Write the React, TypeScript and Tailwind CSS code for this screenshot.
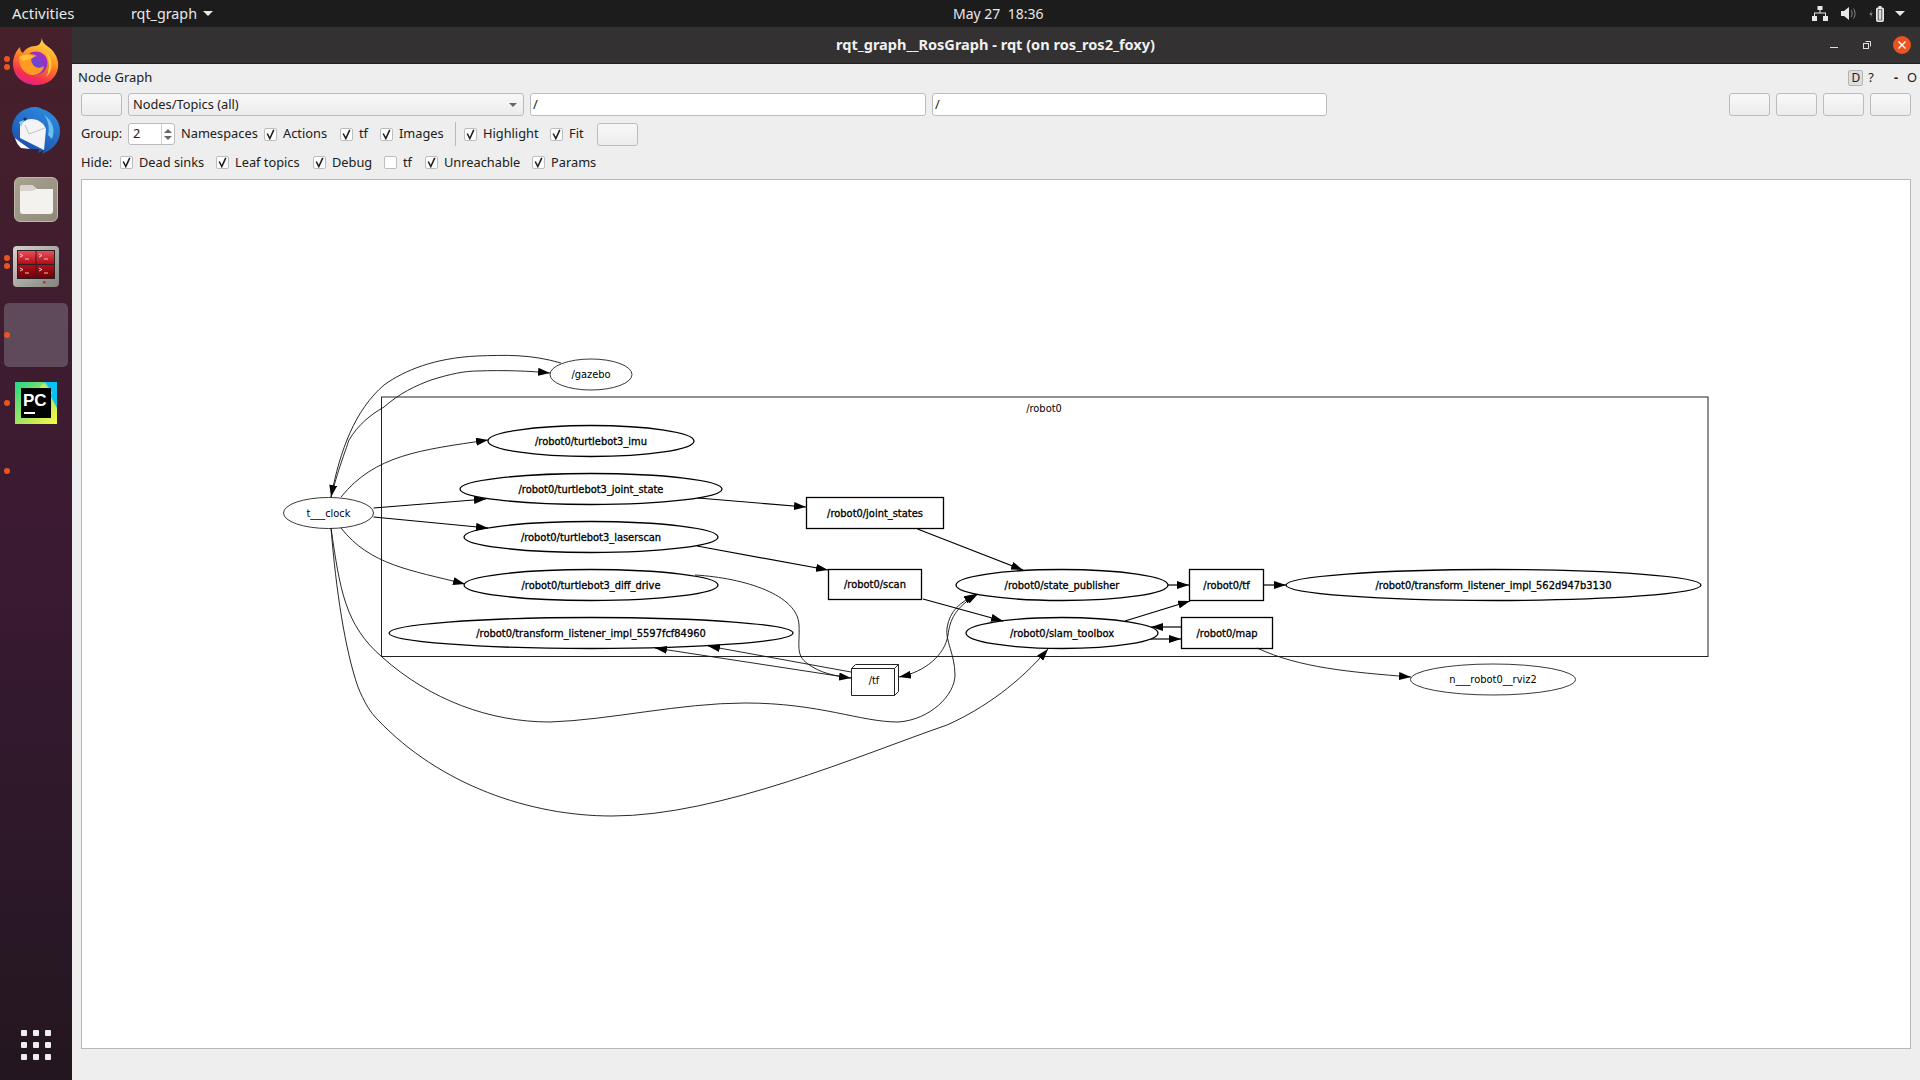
import React from 'react';

const ui = 'font-["Noto_Sans",sans-serif]';

const Check = ({ on = true }: { on?: boolean }) => (
    <span className="w-[13px] h-[13px] shrink-0 bg-white border border-[#bdbdbd] rounded-[2px] flex items-center justify-center">
        {on && (
            <svg width="9" height="11" viewBox="0 0 9 11">
                <path d="M1.2 4.5 L3.8 9.5 L7.8 0.8" fill="none" stroke="#222" strokeWidth="1.6" />
            </svg>
        )}
    </span>
);

const Opt = ({ label, on = true, className = '' }: { label: string; on?: boolean; className?: string }) => (
    <div className={`shrink-0 flex items-center gap-[6px] whitespace-nowrap ${className}`}>
        <Check on={on} />
        <span>{label}</span>
    </div>
);

const Btn = ({ className = '' }: { className?: string }) => (
    <div className={`w-[41px] h-[23px] shrink-0 rounded-[3px] border border-[#bcbcbc] bg-gradient-to-b from-[#f8f8f8] to-[#ececec] ${className}`} />
);

const Firefox = () => (
    <svg width="46" height="48" viewBox="0 0 46 48">
        <defs>
            <linearGradient id="ffa" x1="0.7" y1="0" x2="0.3" y2="1">
                <stop offset="0" stopColor="#ffe14a" />
                <stop offset="0.45" stopColor="#ff8a1f" />
                <stop offset="0.8" stopColor="#f5304f" />
                <stop offset="1" stopColor="#e0218f" />
            </linearGradient>
            <radialGradient id="ffb" cx="0.45" cy="0.6" r="0.6">
                <stop offset="0" stopColor="#5a4fd8" />
                <stop offset="1" stopColor="#a52cc0" />
            </radialGradient>
        </defs>
        <path d="M29 0 C29 5 33 7 38 11 C44 17 46 24 45 30 C43 41 34 47 23 47 C10 47 0 38 0 26 C0 19 3 13 7 9 C7 12 8 14 10 15 C12 11 17 8 22 8 C27 8 28 4 29 0 Z" fill="url(#ffa)" />
        <circle cx="23" cy="25" r="11.5" fill="url(#ffb)" />
        <path d="M6 20 C11 15 19 15 24 18 C19 19 17 21 19 25 C21 30 27 31 31 28 C30 35 22 39 15 36 C9 33 6 27 6 20 Z" fill="#ff9a24" />
        <path d="M6 19 C11 16 17 16 21 19 C17 21 13 22 10 23 Z" fill="#ffc23a" />
        <path d="M33 14 C41 21 40 33 33 39 C37 32 37 23 33 14 Z" fill="#ffcf3a" />
    </svg>
);

const Thunderbird = () => (
    <svg width="48" height="48" viewBox="0 0 48 48">
        <defs>
            <linearGradient id="tba" x1="0.8" y1="0" x2="0.2" y2="1">
                <stop offset="0" stopColor="#2f8de0" />
                <stop offset="1" stopColor="#1a4aa8" />
            </linearGradient>
        </defs>
        <path d="M17 1 C22 -1 27 0 30 2 C40 5 48 13 48 24 C48 33 43 40 36 44 L30 47 L32 43 L26 46 L27 42 L18 42 C8 39 0 32 0 22 C0 12 7 3 17 1 Z" fill="url(#tba)" />
        <path d="M32 8 C40 13 44 22 40 32 L36 28 C38 20 36 13 32 8 Z" fill="#6cc0f0" />
        <path d="M3 31 L8 35 L18 42 L9 41 C6 38 4 35 3 31 Z" fill="#ffffff" />
        <path d="M8 17 L14 13 C22 10 31 14 34 22 L32 43 L8 31 Z" fill="#f4f4f4" />
        <path d="M13 18 L17 27 L33 21" fill="none" stroke="#b5b5b5" strokeWidth="0.8" />
        <path d="M7 15 L12 13 L9 20 Z" fill="#7fd0f0" />
        <circle cx="13" cy="12" r="1.5" fill="#123060" />
    </svg>
);

const Files = () => (
    <div className="w-[44px] h-[45px] rounded-[6px] bg-gradient-to-br from-[#a8a291] to-[#8f8a79] border border-[#bdb8a8] flex items-center justify-center">
        <svg width="33" height="29" viewBox="0 0 33 29">
            <path d="M0 3 Q0 0 3 0 H12 L17 4 H33 V26 Q33 29 30 29 H3 Q0 29 0 26 Z" fill="#f4f2ee" />
            <path d="M0 3 Q0 0 3 0 H12 L17 4 L12 6 H0 Z" fill="#d8d4cb" />
        </svg>
    </div>
);

const RedApp = () => (
    <svg width="46" height="41" viewBox="0 0 46 41">
        <defs>
            <linearGradient id="raf" x1="0" y1="0" x2="1" y2="1">
                <stop offset="0" stopColor="#d4d2cb" />
                <stop offset="1" stopColor="#85837e" />
            </linearGradient>
            <linearGradient id="rat" x1="0" y1="0" x2="0" y2="1">
                <stop offset="0" stopColor="#e8505a" />
                <stop offset="1" stopColor="#b50a14" />
            </linearGradient>
            <linearGradient id="rab" x1="0" y1="0" x2="0" y2="1">
                <stop offset="0" stopColor="#b01018" />
                <stop offset="1" stopColor="#6e0008" />
            </linearGradient>
        </defs>
        <rect width="46" height="41" rx="4" fill="url(#raf)" />
        <rect x="4" y="4" width="38" height="29" fill="#2a2024" />
        <rect x="5" y="5" width="17.5" height="13" fill="url(#rat)" />
        <rect x="23.5" y="5" width="17.5" height="13" fill="url(#rat)" />
        <rect x="5" y="19" width="17.5" height="13" fill="url(#rab)" />
        <rect x="23.5" y="19" width="17.5" height="13" fill="url(#rab)" />
        <path d="M7 8 l3 1.5 l-3 1.5 M12 13 h4 M26 8 l3 1.5 l-3 1.5 M31 13 h4 M7 22 l3 1.5 l-3 1.5 M12 27 h4 M26 22 l3 1.5 l-3 1.5 M31 27 h4" stroke="#f0d8d8" fill="none" strokeWidth="0.9" />
        <rect x="30" y="35" width="2.5" height="2.5" fill="#d8282c" />
        <rect x="34" y="35" width="6" height="3" fill="#8f8d88" />
    </svg>
);

const PyCharm = () => (
    <svg width="42" height="42" viewBox="0 0 42 42">
        <defs>
            <linearGradient id="pca" x1="0" y1="0" x2="1" y2="1">
                <stop offset="0" stopColor="#21d789" />
                <stop offset="0.6" stopColor="#b4e85a" />
                <stop offset="1" stopColor="#fcf84a" />
            </linearGradient>
        </defs>
        <rect width="42" height="42" fill="url(#pca)" />
        <path d="M28 0 H42 V26 Z" fill="#07c3f2" />
        <path d="M24 6 L30 0 L38 12 Z" fill="#fcf84a" opacity="0.6" />
        <rect x="6" y="6" width="30" height="30" fill="#000" />
        <text x="8" y="24" fontFamily="Liberation Sans, sans-serif" fontWeight="700" fontSize="17" fill="#fff">PC</text>
        <rect x="9" y="30" width="11" height="2" fill="#fff" />
    </svg>
);

const Dot = ({ className = '' }: { className?: string }) => (
    <span className={`absolute left-[4px] w-[6px] h-[6px] rounded-full bg-[#e95420] ${className}`} />
);

const Dock = () => (
    <aside className="relative w-[72px] shrink-0 flex flex-col items-center bg-gradient-to-b from-[#46202a] via-[#3a1a33] to-[#231620]">
        <Dot className="top-[29px]" />
        <Dot className="top-[37px]" />
        <div className="mt-[11px] h-[48px]"><Firefox /></div>
        <div className="mt-[21px] h-[48px]"><Thunderbird /></div>
        <div className="mt-[22px] h-[45px]"><Files /></div>
        <Dot className="top-[236px]" />
        <Dot className="top-[228px]" />
        <div className="mt-[24px] h-[41px]"><RedApp /></div>
        <div className="mt-[16px] w-[64px] h-[64px] rounded-[5px] bg-[#5e4a58]" />
        <Dot className="top-[305px]" />
        <div className="mt-[15px] h-[42px]"><PyCharm /></div>
        <Dot className="top-[373px]" />
        <Dot className="top-[441px]" />
        <div className="mt-auto mb-[20px] grid grid-cols-3 gap-[6px]">
            {Array.from({ length: 9 }).map((_, i) => (
                <span key={i} className="w-[6px] h-[6px] rounded-[1px] bg-[#eeeeee]" />
            ))}
        </div>
    </aside>
);

type El = { cx: number; cy: number; rx: number; label: string; thin?: boolean };
type Box = { x: number; y: number; x2: number; y2: number; label: string };

// graph coordinates are screen pixels, the svg viewBox starts at the canvas corner
const ellipses: El[] = [
    { cx: 591, cy: 374.5, rx: 41, label: '/gazebo', thin: true },
    { cx: 328.5, cy: 513, rx: 45, label: 't___clock', thin: true },
    { cx: 1493, cy: 679.5, rx: 82.5, label: 'n___robot0__rviz2', thin: true },
    { cx: 591, cy: 441, rx: 103, label: '/robot0/turtlebot3_imu' },
    { cx: 591, cy: 489, rx: 131, label: '/robot0/turtlebot3_joint_state' },
    { cx: 591, cy: 537, rx: 127, label: '/robot0/turtlebot3_laserscan' },
    { cx: 591, cy: 585, rx: 127, label: '/robot0/turtlebot3_diff_drive' },
    { cx: 591, cy: 633, rx: 202, label: '/robot0/transform_listener_impl_5597fcf84960' },
    { cx: 1062, cy: 585, rx: 106, label: '/robot0/state_publisher' },
    { cx: 1062, cy: 633, rx: 96, label: '/robot0/slam_toolbox' },
    { cx: 1493.5, cy: 585, rx: 207.5, label: '/robot0/transform_listener_impl_562d947b3130' },
];

const boxes: Box[] = [
    { x: 806.5, y: 497.5, x2: 943.5, y2: 528.5, label: '/robot0/joint_states' },
    { x: 828.5, y: 569.5, x2: 921.5, y2: 599.5, label: '/robot0/scan' },
    { x: 1189.5, y: 569.5, x2: 1263.5, y2: 600.5, label: '/robot0/tf' },
    { x: 1181.5, y: 617.5, x2: 1272.5, y2: 648.5, label: '/robot0/map' },
];

// thin curves
const curves = [
    'M561 363 C530 354 505 355 477 356 C435 358 405 370 384 385 C355 410 340 450 331 497',
    'M331 497 C338 470 345 452 349 440 C358 425 370 415 384 407 C400 393 415 386 431 380 C450 374 465 371 477 371 C505 370 530 371 550 373',
    'M341 497 C375 455 420 450 488 440',
    'M341 528 C370 565 410 570 465 584',
    'M695 575 C745 578 798 595 799 625 C800 645 795 655 808 664 C820 673 835 676 851 678',
    'M1257 648 C1300 668 1350 672 1411 677',
    'M331 528 C340 590 345 625 382 657 C430 700 490 722 550 722 C610 720 680 703 745 703 C820 703 860 722 898 722 C930 720 955 695 955 675 C955 655 945 640 947 628 C950 610 960 603 976 594',
    'M331 528 C336 590 345 650 358 687 C364 702 370 712 378 720 C440 785 530 816 612 816 C720 816 860 755 947 725 C985 708 1020 682 1048 649',
    'M851 672 L708 646',
];

const lines = [
    'M373.5 508 L486 499',
    'M373.5 517 L488 528',
    'M698 498 L806 507',
    'M697 546 L828 570',
    'M917.5 529 L1023 570',
    'M923 599 L1003 621',
    'M1168 585 L1189 585',
    'M1125 621 L1190 601',
    'M1181 627 L1151 627',
    'M1151 639 L1181 639',
    'M1264 585 L1286 585',
];

const Graph = () => (
    <svg className="block w-full h-full" viewBox="82 180 1828 868" style={{ fontFamily: '"DejaVu Sans", sans-serif' }}>
        <defs>
            <marker id="hd" viewBox="0 0 12 8" refX="12" refY="4" markerWidth="12" markerHeight="8" markerUnits="userSpaceOnUse" orient="auto-start-reverse">
                <path d="M0 0 L12 4 L0 8 Z" fill="#000" />
            </marker>
        </defs>
        <rect x="381.5" y="397" width="1326.5" height="259.5" fill="none" stroke="#222" strokeWidth="1" />
        <text x="1044" y="412" fontSize="9.9" textAnchor="middle" fill="#000">/robot0</text>
        {curves.map((d, i) => (
            <path key={i} d={d} fill="none" stroke="#111" strokeWidth="0.9" markerEnd="url(#hd)" />
        ))}
        <path d="M899 677 C925 672 945 655 948 635 C950 620 955 607 978 594" fill="none" stroke="#111" strokeWidth="0.9" markerStart="url(#hd)" markerEnd="url(#hd)" />
        <path d="M851 678 L655 648" fill="none" stroke="#111" strokeWidth="0.9" markerEnd="url(#hd)" />
        {lines.map((d, i) => (
            <path key={i} d={d} fill="none" stroke="#000" strokeWidth="1.2" markerEnd="url(#hd)" />
        ))}
        {ellipses.map(e => (
            <g key={e.label}>
                <ellipse cx={e.cx} cy={e.cy} rx={e.rx} ry="15.5" fill="none" stroke={e.thin ? '#222' : '#000'} strokeWidth={e.thin ? 0.9 : 1.3} />
                <text x={e.cx} y={e.cy + 3.6} fontSize="9.9" textAnchor="middle" fill="#000" stroke="#000" strokeWidth={e.thin ? 0 : 0.3}>{e.label}</text>
            </g>
        ))}
        {boxes.map(b => (
            <g key={b.label}>
                <rect x={b.x} y={b.y} width={b.x2 - b.x} height={b.y2 - b.y} fill="none" stroke="#000" strokeWidth="1.3" />
                <text x={(b.x + b.x2) / 2} y={(b.y + b.y2) / 2 + 3.6} fontSize="9.9" textAnchor="middle" fill="#000" stroke="#000" strokeWidth="0.3">{b.label}</text>
            </g>
        ))}
        <path d="M851.5 668.5 H894.5 V695.5 H851.5 Z M851.5 668.5 L855.5 664.5 H898.5 V691.5 L894.5 695.5 M894.5 668.5 L898.5 664.5" fill="none" stroke="#222" strokeWidth="1" />
        <text x="874" y="684" fontSize="9.9" textAnchor="middle" fill="#000">/tf</text>
    </svg>
);

export default function App() {
    return (
        <div className={`w-[1920px] h-[1080px] flex flex-col overflow-hidden bg-[#eeeeee] ${ui}`}>
            {/* GNOME top bar */}
            <header className="relative h-[27px] shrink-0 bg-[#1c1c1c] text-[#e8e8e8] text-[14px] flex items-center pl-[12px] pr-[15px]">
                <span className="w-[119px] text-[15px]">Activities</span>
                <span className="text-[14.3px]">rqt_graph</span>
                <span className="ml-[6px] w-0 h-0 border-x-[5px] border-x-transparent border-t-[5px] border-t-[#e8e8e8]" />
                <span className="absolute left-[953px] top-[3px]">May 27&nbsp;&nbsp;18:36</span>
                <div className="ml-auto flex items-center">
                    <svg width="16" height="15" viewBox="0 0 16 15" fill="#e8e8e8">
                        <rect x="5.5" y="0" width="5" height="4" />
                        <rect x="0" y="10" width="5" height="5" />
                        <rect x="11" y="10" width="5" height="5" />
                        <path d="M7.5 4 h1 v2.5 h5.5 v3.5 h-1 v-2.5 h-10 v2.5 h-1 v-3.5 h5.5 Z" />
                    </svg>
                    <svg className="ml-[13px]" width="15" height="15" viewBox="0 0 15 15" fill="#e8e8e8">
                        <path d="M0 5 H3 L8 1 V14 L3 10 H0 Z" />
                        <path d="M10 4 C11.5 6 11.5 9 10 11 M12.5 2.5 C14.5 5.5 14.5 9.5 12.5 12.5" fill="none" stroke="#8a8a8a" strokeWidth="1" />
                    </svg>
                    <svg className="ml-[13px]" width="15" height="16" viewBox="0 0 15 16">
                        <path d="M2.5 4 L0.5 9 H2 L1.5 12 L3.5 7 H2 Z" fill="#8a8a8a" />
                        <rect x="7.5" y="2" width="7" height="13.5" rx="1" fill="#e8e8e8" stroke="#e8e8e8" />
                        <rect x="8.8" y="3.3" width="4.4" height="11" fill="#1c1c1c" />
                        <rect x="9.5" y="3.8" width="3" height="10" fill="#d8d8d8" />
                        <rect x="9.5" y="0" width="3" height="2" fill="#e8e8e8" />
                    </svg>
                    <span className="ml-[11px] w-0 h-0 border-x-[5px] border-x-transparent border-t-[5px] border-t-[#e8e8e8]" />
                </div>
            </header>
            <div className="flex-1 flex min-h-0">
                <Dock />
                <main className="flex-1 min-w-0 flex flex-col">
                    {/* window title bar */}
                    <div className="relative h-[37px] shrink-0 bg-[#333131] border-b border-[#1f1f1f] flex items-center justify-end text-white">
                        <span className="absolute left-[764px] top-[7px] text-[14.55px] font-bold text-[#f0f0f0]">rqt_graph__RosGraph - rqt (on ros_ros2_foxy)</span>
                        <span className="w-[8px] h-[1px] bg-[#e0e0e0] mt-[4px]" />
                        <svg className="ml-[25px] mb-[1px]" width="8" height="8" viewBox="0 0 8 8" fill="none" stroke="#e0e0e0">
                            <path d="M2.5 0.5 H7.5 V5.5" />
                            <rect x="0.5" y="2.5" width="5" height="5" />
                        </svg>
                        <span className="ml-[22px] mr-[9px] w-[18px] h-[18px] rounded-full bg-[#e95420] flex items-center justify-center">
                            <svg width="10" height="10" viewBox="0 0 10 10" stroke="#fff" strokeWidth="1.4"><path d="M1.5 1.5 L8.5 8.5 M8.5 1.5 L1.5 8.5" /></svg>
                        </span>
                    </div>
                    {/* plugin content */}
                    <div className="flex-1 min-h-0 flex flex-col pl-[9px] pr-[9px] pb-[31px] text-[12.8px] text-[#202020]">
                        <div className="relative h-[29px] shrink-0 flex items-center pb-[2px]">
                            <span className="-ml-[3px] text-[13px]">Node Graph</span>
                            <div className="ml-auto flex items-center -mr-[6px]">
                                <span className="w-[15px] h-[16px] rounded-[2px] border border-[#b5b5b5] bg-[#dedede] flex items-center justify-center text-[12px]">D</span>
                                <span className="ml-[5px]">?</span>
                                <span className="ml-[20px] font-bold">-</span>
                                <span className="ml-[9px]">O</span>
                            </div>
                        </div>
                        <div className="h-[23px] shrink-0 flex items-center">
                            <Btn />
                            <div className="ml-[6px] w-[396px] h-[23px] rounded-[3px] border border-[#bcbcbc] bg-gradient-to-b from-[#f8f8f8] to-[#ececec] flex items-center px-[4px]">
                                <span>Nodes/Topics (all)</span>
                                <span className="ml-auto mr-[2px] w-0 h-0 border-x-[4px] border-x-transparent border-t-[4px] border-t-[#666]" />
                            </div>
                            <div className="ml-[6px] w-[396px] h-[23px] rounded-[3px] border border-[#bcbcbc] bg-white flex items-center px-[2px]">/</div>
                            <div className="ml-[6px] w-[395px] h-[23px] rounded-[3px] border border-[#bcbcbc] bg-white flex items-center px-[2px]">/</div>
                            <div className="ml-auto flex gap-[6px]">
                                <Btn />
                                <Btn />
                                <Btn />
                                <Btn />
                            </div>
                        </div>
                        <div className="mt-[6px] h-[24px] shrink-0 flex items-center">
                            <span className="w-[47px]">Group:</span>
                            <div className="w-[47px] h-[22px] rounded-[3px] border border-[#bcbcbc] bg-white flex items-center pl-[4px]">
                                <span>2</span>
                                <div className="ml-auto w-[13px] h-full border-l border-[#cfcfcf] flex flex-col items-center justify-center gap-[3px]">
                                    <span className="w-0 h-0 border-x-[4px] border-x-transparent border-b-[4px] border-b-[#666]" />
                                    <span className="w-0 h-0 border-x-[4px] border-x-transparent border-t-[4px] border-t-[#666]" />
                                </div>
                            </div>
                            <span className="ml-[6px] w-[83px]">Namespaces</span>
                            <Opt label="Actions" className="w-[76px]" />
                            <Opt label="tf" className="w-[40px]" />
                            <Opt label="Images" className="w-[75px]" />
                            <span className="w-px h-[24px] bg-[#b9b9b9]" />
                            <Opt label="Highlight" className="ml-[8px] w-[86px]" />
                            <Opt label="Fit" className="w-[47px]" />
                            <Btn />
                        </div>
                        <div className="mt-[5px] h-[23px] shrink-0 flex items-center">
                            <span className="w-[39px]">Hide:</span>
                            <Opt label="Dead sinks" className="w-[96px]" />
                            <Opt label="Leaf topics" className="w-[97px]" />
                            <Opt label="Debug" className="w-[71px]" />
                            <Opt label="tf" on={false} className="w-[41px]" />
                            <Opt label="Unreachable" className="w-[107px]" />
                            <Opt label="Params" />
                        </div>
                        <div className="mt-[5px] flex-1 min-h-0 bg-white border border-[#b8b8b8]">
                            <Graph />
                        </div>
                    </div>
                </main>
            </div>
        </div>
    );
}
